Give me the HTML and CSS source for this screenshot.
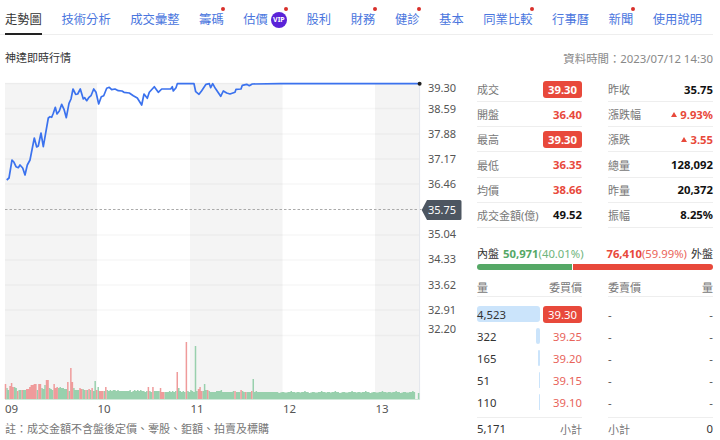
FILE: index.html
```html
<!DOCTYPE html>
<html lang="zh-Hant">
<head>
<meta charset="utf-8">
<title>神達即時行情</title>
<link rel="stylesheet" href="styles.css">
</head>
<body>
<nav class="tabs">
  <a class="tab active">走勢圖</a>
  <a class="tab">技術分析</a>
  <a class="tab">成交彙整</a>
  <a class="tab dot">籌碼</a>
  <a class="tab dot">估價<span class="vip">VIP</span></a>
  <a class="tab">股利</a>
  <a class="tab dot">財務</a>
  <a class="tab dot">健診</a>
  <a class="tab">基本</a>
  <a class="tab dot">同業比較</a>
  <a class="tab">行事曆</a>
  <a class="tab dot">新聞</a>
  <a class="tab">使用說明</a>
</nav>
<header class="head">
  <h1 class="title">神達即時行情</h1>
  <span class="time">資料時間：2023/07/12 14:30</span>
</header>
<main class="main">
  <section class="left">
    <svg class="chart" width="470" height="341" viewBox="0 77 470 341">
      <g class="bands">
        <rect x="5" y="83" width="92" height="316"/>
        <rect x="190" y="83" width="92.5" height="316"/>
        <rect x="375" y="83" width="44.5" height="316"/>
      </g>
      <path class="grid" d="M5 83.5H419M5 108.5H419M5 134H419M5 159H419M5 184H419M5 235H419M5 260H419M5 285H419M5 310H419M5 335.5H419"/>
      <path class="dash" d="M5 209.5H422"/>
      <path class="axis" d="M419.6 83V400"/>
      <path id="volGreen" class="vol-green" d=""/>
      <path id="volRed" class="vol-red" d=""/>
      <path class="baseline" d="M5 399.5H419.6"/>
      <polyline class="price" points="6.7,180 9,178 12,160 14,162.3 16,166.7 18.3,167.7 20,165 22.7,168 25,175 27.3,165 30,160 34.3,138 36.7,147 38.3,146 41,133 43.3,146.7 48.3,118 50,116.7 51.7,117.3 53.3,113.3 55.3,107.3 57,114 59.3,111 61.7,104.3 64,109.3 66.3,117.7 69,103.3 71,99 73,89 75.7,94.3 77.7,94 80.3,89 83.3,99 84.7,97.7 86.7,100.7 88.7,97.7 91,95.7 93.7,89 96,92.3 98.7,104 101.3,96.7 103.7,95.7 106.7,88.3 109.3,87.3 111.7,89.7 115,89 118.3,90.7 122,91 124,92.3 129.3,93 133.3,95.7 137.3,98 141.7,105 144,94 147.3,98.3 149.3,92.3 154.3,86.7 158.3,92.3 161.7,89 170.7,89 172.3,86.7 173.3,91 176,87.7 177.3,83.7 194,83.7 195.7,91.7 199,94.3 201.7,90.7 206,84.3 209.3,83.7 210.7,87.7 212.7,83.7 215.3,88.3 220.7,96.3 223.3,91 226.7,93 230,94 235,92.3 236,89.3 241,89 242.3,85.3 246.7,84.3 249.3,85.7 252.3,84 280,83.7 419.6,83.7"/>
      <circle class="end" cx="419.6" cy="83.7" r="2"/>
      <g class="ylabels">
        <text x="428" y="92">39.30</text>
        <text x="428" y="113">38.59</text>
        <text x="428" y="138">37.88</text>
        <text x="428" y="163">37.17</text>
        <text x="428" y="188">36.46</text>
        <text x="428" y="238">35.04</text>
        <text x="428" y="263">34.33</text>
        <text x="428" y="289">33.62</text>
        <text x="428" y="314">32.91</text>
        <text x="428" y="333">32.20</text>
      </g>
      <path class="tag" d="M427 200H460a1.5 1.5 0 0 1 1.5 1.5V218.500a1.500 1.500 0 0 1-1.500 1.500H427L421.700 210Z"/>
      <text class="tag-text" x="428" y="214">35.75</text>
      <g class="xlabels">
        <text x="5" y="413">09</text>
        <text x="97.500" y="413">10</text>
        <text x="190.500" y="413">11</text>
        <text x="283" y="413">12</text>
        <text x="375.500" y="413">13</text>
      </g>
    </svg>
    <p class="note">註：成交金額不含盤後定價、零股、鉅額、拍賣及標購</p>
  </section>
  <section class="side">
    <div class="stats">
      <div class="stat"><span class="label">成交</span><b class="badge">39.30</b></div>
      <div class="stat"><span class="label">昨收</span><b>35.75</b></div>
      <div class="stat"><span class="label">開盤</span><b class="up">36.40</b></div>
      <div class="stat"><span class="label">漲跌幅</span><b class="up"><i class="tri"></i>9.93%</b></div>
      <div class="stat"><span class="label">最高</span><b class="badge">39.30</b></div>
      <div class="stat"><span class="label">漲跌</span><b class="up"><i class="tri"></i>3.55</b></div>
      <div class="stat"><span class="label">最低</span><b class="up">36.35</b></div>
      <div class="stat"><span class="label">總量</span><b>128,092</b></div>
      <div class="stat"><span class="label">均價</span><b class="up">38.66</b></div>
      <div class="stat"><span class="label">昨量</span><b>20,372</b></div>
      <div class="stat"><span class="label">成交金額(億)</span><b>49.52</b></div>
      <div class="stat"><span class="label">振幅</span><b>8.25%</b></div>
    </div>
    <div class="ratio">
      <div class="ratio-text">
        <span><span class="dark in">內盤</span><b class="green">50,971</b><span class="green">(40.01%)</span></span>
        <span><b class="up">76,410</b><span class="up">(59.99%)</span><span class="dark out">外盤</span></span>
      </div>
      <div class="ratio-bar"><i class="bar-in"></i><i class="bar-out"></i></div>
    </div>
    <div class="book">
      <div class="book-col">
        <div class="book-head"><span>量</span><span>委買價</span></div>
        <div class="book-row"><span class="qty"><i class="fill" style="width:100%"></i><span class="qty-num">4,523</span></span><span class="price-cell hit">39.30</span></div>
        <div class="book-row"><span class="qty"><i class="fill" style="width:7%"></i><span class="qty-num">322</span></span><span class="price-cell">39.25</span></div>
        <div class="book-row"><span class="qty"><i class="fill" style="width:3.6%"></i><span class="qty-num">165</span></span><span class="price-cell">39.20</span></div>
        <div class="book-row"><span class="qty"><i class="fill" style="width:1.2%"></i><span class="qty-num">51</span></span><span class="price-cell">39.15</span></div>
        <div class="book-row"><span class="qty"><i class="fill" style="width:2.4%"></i><span class="qty-num">110</span></span><span class="price-cell">39.10</span></div>
        <div class="book-foot"><span class="dark-num">5,171</span><span>小計</span></div>
      </div>
      <div class="book-col">
        <div class="book-head"><span>委賣價</span><span>量</span></div>
        <div class="book-row sell"><span>-</span><span>-</span></div>
        <div class="book-row sell"><span>-</span><span>-</span></div>
        <div class="book-row sell"><span>-</span><span>-</span></div>
        <div class="book-row sell"><span>-</span><span>-</span></div>
        <div class="book-row sell"><span>-</span><span>-</span></div>
        <div class="book-foot"><span>小計</span><span class="dark-num">0</span></div>
      </div>
    </div>
  </section>
</main>
<script src="app.js"></script>
</body>
</html>
```
FILE: styles.css
```css
* { box-sizing: border-box; }
html, body { margin: 0; padding: 0; }
body {
  width: 720px;
  height: 440px;
  overflow: hidden;
  background: #fff;
  color: #333;
  font-family: "Noto Sans", "Noto Sans CJK TC", sans-serif;
  font-size: 11px;
}
.tabs {
  display: flex;
  gap: 19.6px;
  width: 713px;
  height: 35px;
  padding: 0 0 0 5px;
  border-bottom: 1px solid #eee;
}
.tab {
  position: relative;
  display: flex;
  align-items: center;
  height: 35px;
  padding-top: 5px;
  color: #4a76de;
  font-size: 12.3px;
  line-height: 16px;
}
.tab.active { color: #333; border-bottom: 2px solid #222; padding-top: 7px; height: 34.500px; }
.tab.dot::after {
  content: "";
  position: absolute;
  top: 6.500px;
  right: -1.500px;
  width: 4px;
  height: 4px;
  border-radius: 50%;
  background: #d9302a;
}
.vip {
  display: flex;
  align-items: center;
  justify-content: center;
  width: 16px;
  height: 16px;
  margin-left: 3px;
  border-radius: 50%;
  background: #5a22d8;
  color: #fff;
  font-size: 7px;
  font-weight: 700;
}
.head {
  display: flex;
  justify-content: space-between;
  align-items: center;
  width: 713px;
  height: 42px;
  padding: 3px 0 0 5px;
}
.title { margin: 0; font-size: 11px; font-weight: 400; color: #333; line-height: 16px; }
.time { color: #888; font-size: 11.400px; }
.main { display: flex; }
.left { width: 477px; flex: none; }
.chart { display: block; font-size: 11px; }
.bands rect { fill: #f4f4f4; }
.grid { fill: none; stroke: #000; stroke-opacity: .03; stroke-width: 1.5; }
.dash { fill: none; stroke: #aaa; stroke-width: 1; stroke-dasharray: 2.500 2; }
.axis { fill: none; stroke: #e2e5ec; stroke-width: 1; }
.vol-green { fill: none; stroke: #98d0ad; stroke-width: 1.500; }
.vol-red { fill: none; stroke: #ef9b9b; stroke-width: 1.500; }
.baseline { fill: none; stroke: #cfe8d8; stroke-width: 1; }
.price { fill: none; stroke: #3b72ee; stroke-width: 1.700; stroke-linejoin: round; }
.end { fill: #222; }
.ylabels text, .xlabels text { fill: #555; font-size: 11px; }
.xlabels text { font-size: 11.500px; }
.tag { fill: #4d5661; }
.tag-text { fill: #fff; font-size: 11px; }
.note { margin: 3px 0 0 5px; color: #777; font-size: 11px; line-height: 16px; }
.side { width: 236px; flex: none; }
.stats {
  display: grid;
  grid-template-columns: 105px 105px;
  column-gap: 26px;
}
.stat {
  display: flex;
  justify-content: space-between;
  align-items: center;
  height: 25.170px;
  border-bottom: 1px solid #eee;
  color: #111;
}
.stat b { font-weight: 700; font-size: 11.300px; }
.label { color: #777; }
.up { color: #e8493b; }
.green { color: #55a866; }
.dark { color: #333; }
.stat b.badge {
  display: flex;
  align-items: center;
  justify-content: center;
  width: 39px;
  height: 17px;
  border-radius: 3px;
  background: #e8493b;
  color: #fff;
}
.tri {
  display: inline-block;
  width: 0;
  height: 0;
  margin-right: 3px;
  border-left: 3.500px solid transparent;
  border-right: 3.500px solid transparent;
  border-bottom: 5px solid #e8493b;
  vertical-align: 1.500px;
}
.ratio { padding-top: 18px; }
.ratio-text { display: flex; justify-content: space-between; line-height: 16px; font-size: 11.300px; }
.ratio-text .dark { font-size: 11px; }
.ratio-text .in { margin-right: 4px; }
.ratio-text .out { margin-left: 4px; }
.ratio-text b { font-weight: 700; }
.ratio-text .green:not(b), .ratio-text .up:not(b) { opacity: .85; }
.ratio-bar { display: flex; gap: 1.500px; height: 6px; margin-top: 2.500px; }
.bar-in { width: 94.500px; background: #55a866; border-radius: 3px 0 0 3px; }
.bar-out { flex: 1; background: #e8493b; border-radius: 0 3px 3px 0; }
.book {
  display: grid;
  grid-template-columns: 105px 105px;
  column-gap: 26px;
}
.book-head {
  display: flex;
  justify-content: space-between;
  align-items: center;
  height: 27px;
  padding-top: 8px;
  border-bottom: 1px solid #eee;
  color: #777;
  margin-bottom: 6px;
}
.book-row {
  display: flex;
  align-items: center;
  height: 22px;
  color: #333;
  font-size: 11.300px;
}
.book-row.sell { justify-content: space-between; color: #555; }
.qty { position: relative; display: flex; align-items: center; width: 63px; height: 16px; }
.qty-num { position: relative; }
.fill {
  position: absolute;
  right: 0;
  top: 0;
  bottom: 0;
  border-radius: 3px;
  background: #cbe4fb;
}
.price-cell {
  display: flex;
  align-items: center;
  justify-content: flex-end;
  width: 39px;
  height: 17px;
  margin-left: 3px;
  color: #e8635a;
}
.price-cell.hit { justify-content: center; border-radius: 3px; background: #e8493b; color: #fff; }
.book-foot {
  display: flex;
  justify-content: space-between;
  align-items: center;
  height: 22px;
  margin-top: 4px;
  border-top: 1px solid #eee;
  color: #777;
  font-size: 11px;
}
.dark-num { color: #333; font-size: 11.300px; }
```
FILE: app.js
```js
// One-minute volume bars: height in pixels, with the up-tick minutes listed in `red`.
var heights = [15,11,9,13,16,12,12,11,8,9,9,9,9,9,10,10,12,14,14,15,15,9,15,15,11,10,14,19,19,11,10,9,15,11,12,11,12,11,11,10,10,17,8,31,17,11,9,9,9,11,10,10,9,9,9,10,9,11,8,18,9,12,8,8,8,8,12,9,8,9,8,9,9,8,9,8,8,8,8,8,8,8,9,7,8,9,8,9,8,9,8,8,7,8,12,8,7,12,8,8,8,8,11,7,7,7,7,7,8,7,8,7,8,27,11,8,7,8,7,57,8,7,9,8,7,53,8,10,12,8,8,15,9,9,8,7,7,7,7,8,8,8,9,7,7,7,7,7,7,7,8,8,7,7,7,9,8,7,7,7,7,7,8,20,7,8,7,7,7,7,7,7,7,7,7,7,7,7,7];
var red = [0,3,4,5,8,11,14,15,16,17,18,19,20,22,23,27,28,32,33,34,41,43,44,49,50,53,55,57,60,62,63,64,66,94,97,102,103,104,113,119,127,128,129,133,151,155,158,162];
var extra = [6,6.500,7,7,6.500,6.500,7,7,8,7,7,6.500,7,7,6.500,7,7,8,7,7];
var green = "", redPath = "", i;
while (heights.length < 270) {
  heights.push(extra[heights.length % extra.length]);
}
for (i = 0; i < 270; i++) {
  var x = (5.5 + i * 1.52).toFixed(2);
  var seg = "M" + x + " 399V" + (399 - heights[i]);
  if (red.indexOf(i) >= 0) { redPath += seg; } else { green += seg; }
}
green += "M418.6 399V393";
document.getElementById("volGreen").setAttribute("d", green);
document.getElementById("volRed").setAttribute("d", redPath);
```
